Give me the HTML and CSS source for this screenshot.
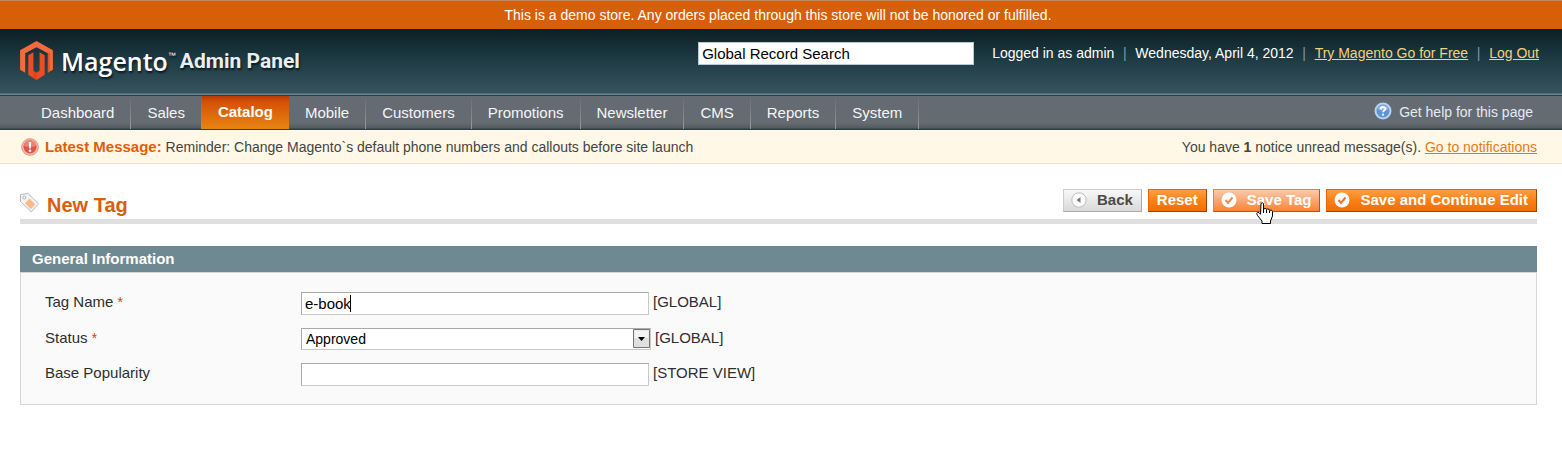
FILE: index.html
```html
<!DOCTYPE html>
<html lang="en">
<head>
<meta charset="utf-8">
<title>New Tag / Magento Admin</title>
<link rel="stylesheet" href="styles.css">
</head>
<body>
<p class="demo-notice">This is a demo store. Any orders placed through this store will not be honored or fulfilled.</p>
<header class="header">
  <a class="logo" href="#">
    <svg class="logo-mark" viewBox="1 1 32 39" aria-hidden="true">
      <path fill="#f26a3d" d="M17 1 33 10v19l-5 3V13L17 7 6 13v19l-5-3V10z"/>
      <path fill="#ee4d24" d="M9 15l5-3v18l3 2 3-2V12l5 3v19l-8 5-8-5z"/>
      <path fill="#c93c1c" d="M14 12v18l3 2v7l-3-2zM28 13l2-1v19l-2 1z" opacity=".45"/>
    </svg>
    <span class="logo-name">Magento</span><span class="logo-tm">™</span>
    <span class="logo-panel">Admin Panel</span>
  </a>
  <div class="header-right">
    <input class="search" type="text" value="Global Record Search" aria-label="Global Record Search">
    <p class="session">
      <span>Logged in as admin</span><span class="sep">|</span><span>Wednesday, April 4, 2012</span><span class="sep">|</span><a href="#">Try Magento Go for Free</a><span class="sep">|</span><a href="#">Log Out</a>
    </p>
  </div>
</header>
<nav class="nav">
  <ul class="menu">
    <li><a href="#">Dashboard</a></li>
    <li><a href="#">Sales</a></li>
    <li class="active"><a href="#">Catalog</a></li>
    <li><a href="#">Mobile</a></li>
    <li><a href="#">Customers</a></li>
    <li><a href="#">Promotions</a></li>
    <li><a href="#">Newsletter</a></li>
    <li><a href="#">CMS</a></li>
    <li><a href="#">Reports</a></li>
    <li><a href="#">System</a></li>
  </ul>
  <a class="help" href="#">
    <svg width="18" height="18" viewBox="0 0 18 18" aria-hidden="true">
      <circle cx="9" cy="9" r="7.500" fill="#5f93d3" stroke="#b5d2f0" stroke-width="2"/>
      <path d="M3.500 7a6 6 0 0 1 11 0q-5.500 3-11 0z" fill="#9cc2ec"/>
      <path d="M6.800 7.200C6.800 4.300 11.300 4.300 11.300 7c0 1.600-2.300 1.700-2.300 3.300" fill="none" stroke="#fff" stroke-width="1.800"/>
      <circle cx="9" cy="12.700" r="1.100" fill="#fff"/>
    </svg>
    Get help for this page
  </a>
</nav>
<div class="notification">
  <p class="latest">
    <svg width="18" height="18" viewBox="0 0 18 18" aria-hidden="true">
      <circle cx="9" cy="9" r="8.300" fill="#f5b9a8" stroke="#ea9482"/>
      <circle cx="9" cy="9" r="6.500" fill="#dd5348"/>
      <path d="M3 8a6 6 0 0 1 12 0q-6 2-12 0z" fill="#e98478"/>
      <path d="M7.800 4h2.400l-.4 6.500H8.200z" fill="#fff"/>
      <circle cx="9" cy="12.700" r="1.300" fill="#fff"/>
    </svg>
    <span><strong>Latest Message:</strong> Reminder: Change Magento`s default phone numbers and callouts before site launch</span>
  </p>
  <p>You have <b>1</b> notice unread message(s). <a href="#">Go to notifications</a></p>
</div>
<main class="content">
  <div class="content-header">
    <h1>
      <svg width="20" height="20" viewBox="0 0 20 20" aria-hidden="true">
        <path d="M.5 1.500 8 .5l10.500 10.300-7.300 8L.5 8.500z" fill="#f6f6f6" stroke="#b9b9b9"/>
        <path d="M9.500 5.500l5.800 5.700-4.500 5-5.800-6z" fill="#fbb98a"/>
        <circle cx="4.300" cy="4.500" r="1.500" fill="#fff" stroke="#aaa"/>
      </svg>
      New Tag
    </h1>
    <div class="actions">
      <button class="btn back" type="button">
        <svg width="16" height="16" viewBox="0 0 16 16" aria-hidden="true"><circle cx="8" cy="8" r="7.200" fill="#fff" stroke="#bdbdbd"/><path d="M9.500 5v6L5.500 8z" fill="#777"/></svg>
        Back
      </button>
      <button class="btn" type="button">Reset</button>
      <button class="btn hovered" type="button">
        <svg width="16" height="16" viewBox="0 0 16 16" aria-hidden="true"><circle cx="8" cy="8" r="7.500" fill="#fff"/><path d="M4.500 8l2.500 3 4.500-5.500" fill="none" stroke="#f08a4d" stroke-width="2"/></svg>
        Save Tag
        <svg class="pointer" width="18" height="22" viewBox="0 0 18 22" aria-hidden="true"><path d="M5 1.500q1.500-1.500 2.500 0V7l1.500-.5q1.500 0 1.500 1l1-.5q1.700 0 2 1.200 2.500-.7 3 1.300v4.500L14.500 19v2.500H6V19L1.500 13.500Q0 11 1.500 10.300q1.500-.3 3 2z" fill="#fff" stroke="#000"/><path d="M7.500 7v4M10.500 8v3M13.500 8.500V11" stroke="#000"/></svg>
      </button>
      <button class="btn" type="button">
        <svg width="16" height="16" viewBox="0 0 16 16" aria-hidden="true"><circle cx="8" cy="8" r="7.500" fill="#fff"/><path d="M4.500 8l2.500 3 4.500-5.500" fill="none" stroke="#e9762c" stroke-width="2"/></svg>
        Save and Continue Edit
      </button>
    </div>
  </div>
  <form class="entry">
    <h2>General Information</h2>
    <div class="fieldset">
      <div class="row">
        <label for="tag-name">Tag Name <span class="required">*</span></label>
        <span class="control"><input id="tag-name" type="text" value="e-book"><i class="caret"></i></span>
        <span class="scope">[GLOBAL]</span>
      </div>
      <div class="row">
        <label for="status">Status <span class="required">*</span></label>
        <span class="control select">
          <select id="status"><option>Approved</option></select>
          <svg class="arrow" width="17" height="19" viewBox="0 0 17 19" aria-hidden="true"><path d="M.5.500h16v18H.5z" fill="#e0e0e0" stroke="#777"/><path d="M1.500 1.500h14V9h-14z" fill="#f3f3f3"/><path d="M5 8h7l-3.500 4z" fill="#000"/></svg>
        </span>
        <span class="scope">[GLOBAL]</span>
      </div>
      <div class="row">
        <label for="popularity">Base Popularity</label>
        <span class="control"><input id="popularity" type="text"></span>
        <span class="scope">[STORE VIEW]</span>
      </div>
    </div>
  </form>
</main>
</body>
</html>
```
FILE: styles.css
```css
* {
  box-sizing: border-box;
}

body {
  margin: 0;
  background: #fff;
  color: #2f2f2f;
  font: 14px/18px "Liberation Sans", Arial, sans-serif;
}

p, h1, h2, ul {
  margin: 0;
}

.demo-notice {
  padding: 5px 6px 5px 0;
  border-top: 1px solid #c08a60;
  background: #d75f07;
  color: #fff;
  text-align: center;
}

.header {
  display: flex;
  justify-content: space-between;
  align-items: flex-start;
  padding: 12px 23px 0 20px;
  height: 67px;
  border-bottom: 1px solid #24404a;
  background: linear-gradient(#0b2023, #1b3740 40%, #37545e 64px, #6b8590 65px);
}

.logo {
  display: flex;
  align-items: flex-start;
  color: #fff;
  text-decoration: none;
  text-shadow: 1px 2px 2px #0a1a1e;
}

.logo-mark {
  width: 33px;
  height: 40px;
  margin-right: 8px;
}

.logo-name {
  font: 600 25px/40px "Open Sans", sans-serif;
}

.logo-tm {
  font-size: 8px;
  line-height: 30px;
}

.logo-panel {
  margin-left: 4px;
  color: #e9eef0;
  font: bold 21px/41px Roboto, "Liberation Sans", sans-serif;
}

.header-right {
  display: flex;
  align-items: flex-start;
  gap: 18px;
}

.search {
  width: 276px;
  height: 23px;
  margin-top: 1px;
  padding: 0 3px;
  border: 1px solid #b9cbd2;
  background: #fff;
  color: #000;
  font: 15px "Liberation Sans", Arial, sans-serif;
}

.session {
  display: flex;
  padding-top: 3px;
  color: #fff;
}

.session a {
  color: #f3d27a;
}

.sep {
  width: 21px;
  color: #87969b;
  text-align: center;
}

.nav {
  display: flex;
  justify-content: space-between;
  align-items: flex-start;
  height: 34px;
  padding: 0 29px 0 25px;
  background: linear-gradient(#656b72, #656b72 27px, #525a60 32px, #303f42 33px);
  font-size: 15px;
}

.menu {
  display: flex;
  padding: 0;
  list-style: none;
}

.menu li {
  border-right: 1px solid;
  border-image: linear-gradient(#656b72, #969ba0) 1;
}

.menu a {
  display: block;
  padding: 8px 16px 7px;
  color: #f4f6f8;
  text-decoration: none;
}

.menu .active {
  border: 0;
}

.menu .active a {
  padding: 7px 16px 8px;
  background: linear-gradient(#b93c05, #d55106 6px, #e88512);
  color: #fff;
  font-weight: bold;
}

.help {
  display: flex;
  gap: 7px;
  padding-top: 7px;
  color: #e4eaf5;
  font-size: 14px;
  text-decoration: none;
}

.help svg {
  margin-top: -1px;
}

.notification {
  display: flex;
  justify-content: space-between;
  padding: 8px 25px 7px 21px;
  border-bottom: 1px solid #eee2c9;
  background: #fff8e6;
  color: #444;
}

.latest {
  display: flex;
  gap: 6px;
}

.latest strong {
  color: #e25d0b;
  font-size: 15px;
}

.notification a {
  color: #e57a1b;
}

.content {
  padding: 25px 25px 0 20px;
}

.content-header {
  display: flex;
  justify-content: space-between;
  height: 35px;
  margin-bottom: 22px;
  border-bottom: 5px solid #dfdfdf;
}

h1 {
  display: flex;
  gap: 7px;
  padding-top: 4px;
  color: #db5e0a;
  font-size: 20px;
  line-height: 24px;
}

.actions {
  display: flex;
  align-items: flex-start;
  gap: 6px;
}

.btn {
  position: relative;
  display: flex;
  align-items: center;
  gap: 10px;
  height: 23px;
  padding: 0 8px 1px;
  border: 1px solid;
  border-color: #ed6502 #a04300 #a04300 #ed6502;
  background: linear-gradient(#fda044, #fa8014 50%, #f46c05);
  color: #fff;
  font: bold 15px/20px "Liberation Sans", Arial, sans-serif;
  white-space: nowrap;
}

.btn svg:first-child {
  margin-left: -1px;
}

.btn.back {
  border-color: #ccc #aaa #aaa #ccc;
  background: linear-gradient(#f8f8f8, #d9d9d9);
  color: #4a4a4a;
}

.btn.hovered {
  border-color: #ed7d3a #a85a28 #a85a28 #ed7d3a;
  background: linear-gradient(#fbcba9, #f9a673 50%, #fb8431);
}

.pointer {
  position: absolute;
  top: 12px;
  left: 42px;
}

h2 {
  padding: 4px 12px;
  background: #6f8992;
  color: #fff;
  font-size: 15px;
  line-height: 18px;
}

.fieldset {
  display: flex;
  flex-direction: column;
  gap: 13px;
  padding: 19px 24px 18px;
  border: 1px solid #d6d6d6;
  background: #fafafa;
}

.row {
  display: flex;
  align-items: flex-start;
  gap: 4px;
  font-size: 15px;
}

.row label {
  width: 252px;
  padding-top: 1px;
}

.required {
  color: #eb340a;
  font-size: 14px;
}

.control {
  position: relative;
  width: 348px;
}

.control.select {
  width: 350px;
}

.control input,
.control select {
  display: block;
  width: 100%;
  height: 23px;
  padding: 0 3px;
  border: 1px solid;
  border-color: #aaa #c8c8c8 #c8c8c8 #aaa;
  border-radius: 0;
  background: #fff;
  color: #000;
  font: 15px "Liberation Sans", Arial, sans-serif;
  outline: 0;
}

.control select {
  height: 22px;
  padding: 0 4px;
  appearance: none;
  font-size: 14px;
}

.caret {
  position: absolute;
  top: 3px;
  left: 49px;
  width: 1px;
  height: 17px;
  background: #000;
}

.arrow {
  position: absolute;
  top: 1px;
  right: 1px;
  pointer-events: none;
}

.scope {
  padding-top: 1px;
}
```
